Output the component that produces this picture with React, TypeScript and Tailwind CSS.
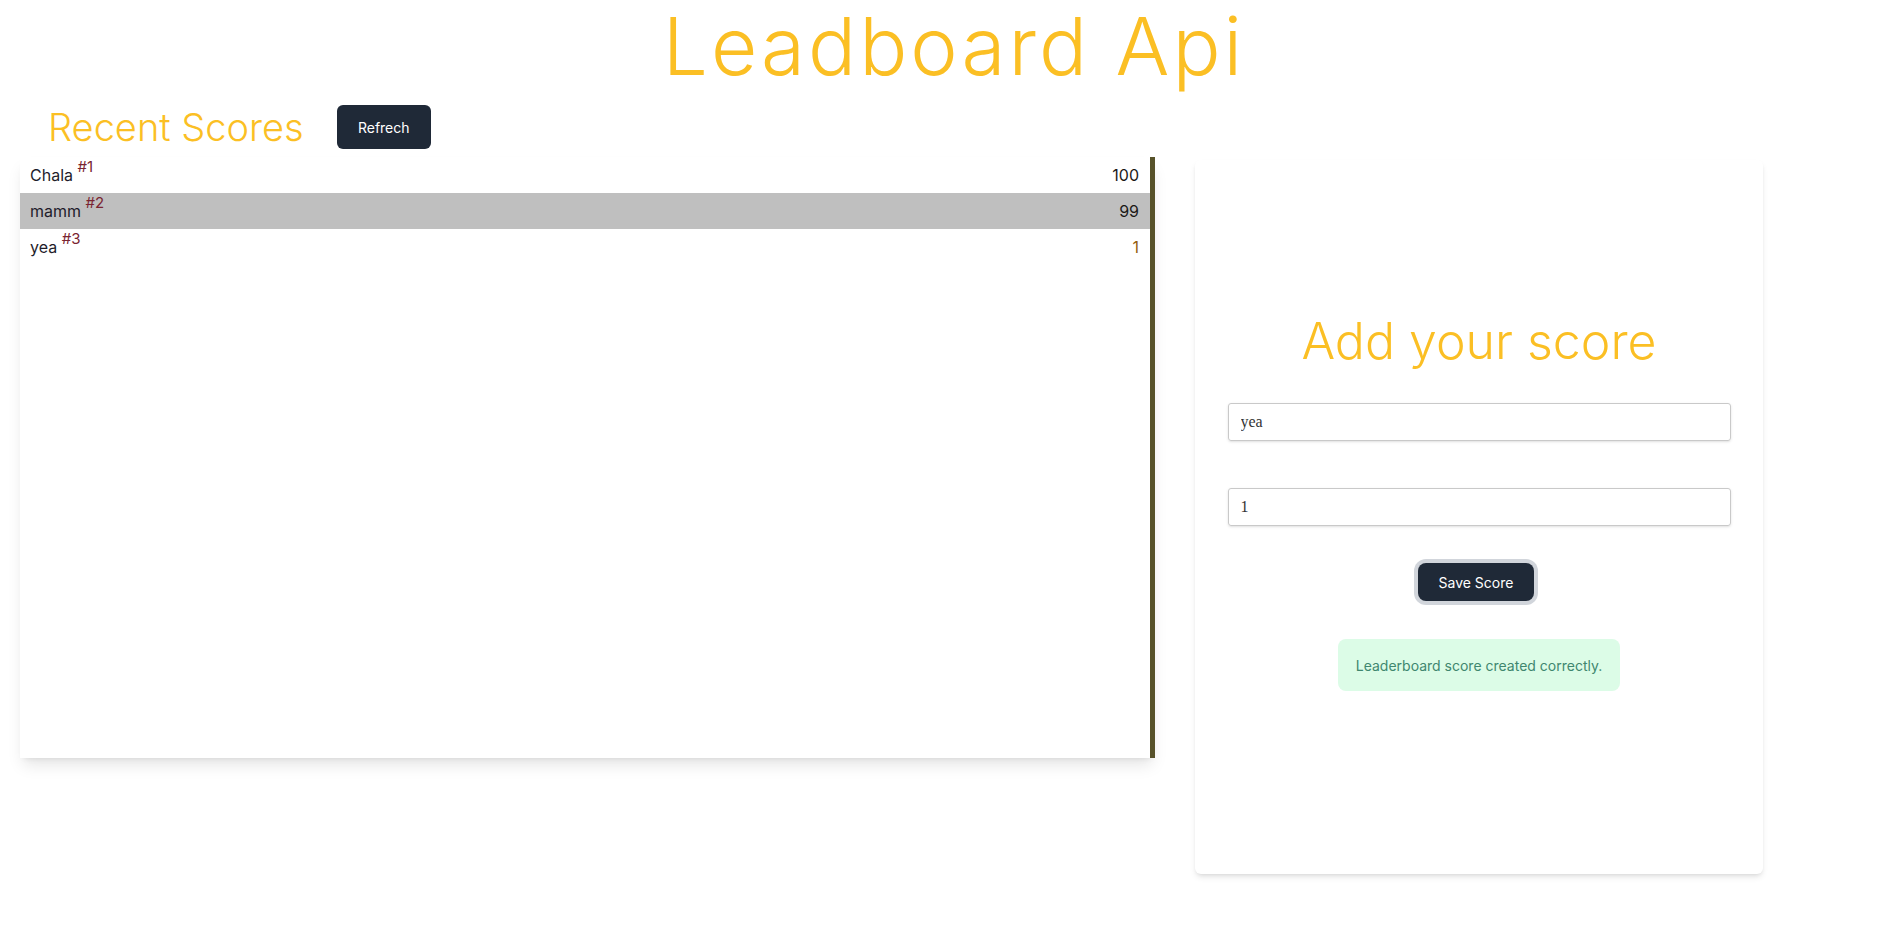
import React, { useState } from "react";

interface Score {
  user: string;
  score: number;
  scoreColor: string;
}

const scores: Score[] = [
  { user: "Chala", score: 100, scoreColor: "text-[#1c1917]" },
  { user: "mamm", score: 99, scoreColor: "text-[#1c1917]" },
  { user: "yea", score: 1, scoreColor: "text-[#93600f]" },
];

const font = "font-['Inter','Open_Sans',sans-serif]";

export default function App() {
  const [name, setName] = useState("yea");
  const [score, setScore] = useState("1");

  return (
    <div className={`min-h-screen w-full bg-white ${font}`}>
      {/* Title */}
      <h1 className="pt-[6px] pl-[16px] text-center text-[80px] font-light leading-none tracking-[3px] text-[#fbbf24]">
        Leadboard Api
      </h1>

      {/* Header row */}
      <div className="mt-[19px] flex h-[44px] items-center gap-[33px] pl-[48px]">
        <h2 className="text-[38px] font-light leading-none text-[#fbbf24]">Recent Scores</h2>
        <button className="h-[44px] w-[94px] rounded-md bg-[#1f2937] text-[14px] font-normal text-white">
          Refrech
        </button>
      </div>

      <div className="mt-[8px] flex items-start gap-[40px] pl-[20px]">
        {/* Scores list */}
        <ul className="h-[601px] w-[1135px] border-r-[5px] border-[#57522a] bg-white shadow-lg">
          {scores.map((s, i) => (
            <li
              key={s.user}
              className={`flex h-[36px] items-start justify-between pl-[10px] pr-[11px] pt-[6px] text-[16px] leading-[24px] ${
                i % 2 === 1 ? "bg-[#bfbfbf]" : ""
              }`}
            >
              <span className="text-[#1f1d2b]">
                {s.user}{" "}
                <span className="relative -top-[9px] text-[15px] text-[#7a2431]">#{i + 1}</span>
              </span>
              <span className={s.scoreColor}>{s.score}</span>
            </li>
          ))}
        </ul>

        {/* Add score card */}
        <div className="mt-[3px] flex h-[714px] w-[568px] flex-col items-center rounded-md bg-white pt-[156px] shadow-md">
          <h2 className="text-[50px] font-light leading-none text-[#fbbf24]">Add your score</h2>
          <input
            value={name}
            onChange={(e) => setName(e.target.value)}
            className="mt-[37px] h-[38px] w-[503px] rounded-[3px] border border-[#c9c9c9] px-[12px] font-['Liberation_Serif',serif] text-[16px] text-[#333] shadow-sm outline-none"
          />
          <input
            value={score}
            onChange={(e) => setScore(e.target.value)}
            className="mt-[47px] h-[38px] w-[503px] rounded-[3px] border border-[#c9c9c9] px-[12px] font-['Liberation_Serif',serif] text-[16px] text-[#333] shadow-sm outline-none"
          />
          <button className="mt-[37px] h-[38px] w-[116px] -translate-x-[3px] rounded-lg bg-[#1f2937] text-[14px] font-normal text-white ring-4 ring-[#d1d5db]">
            Save Score
          </button>
          <div className="mt-[38px] flex h-[52px] items-center rounded-lg bg-[#dcfce7] px-[18px] text-[14px] text-[#40876f]">
            Leaderboard score created correctly.
          </div>
        </div>
      </div>
    </div>
  );
}
